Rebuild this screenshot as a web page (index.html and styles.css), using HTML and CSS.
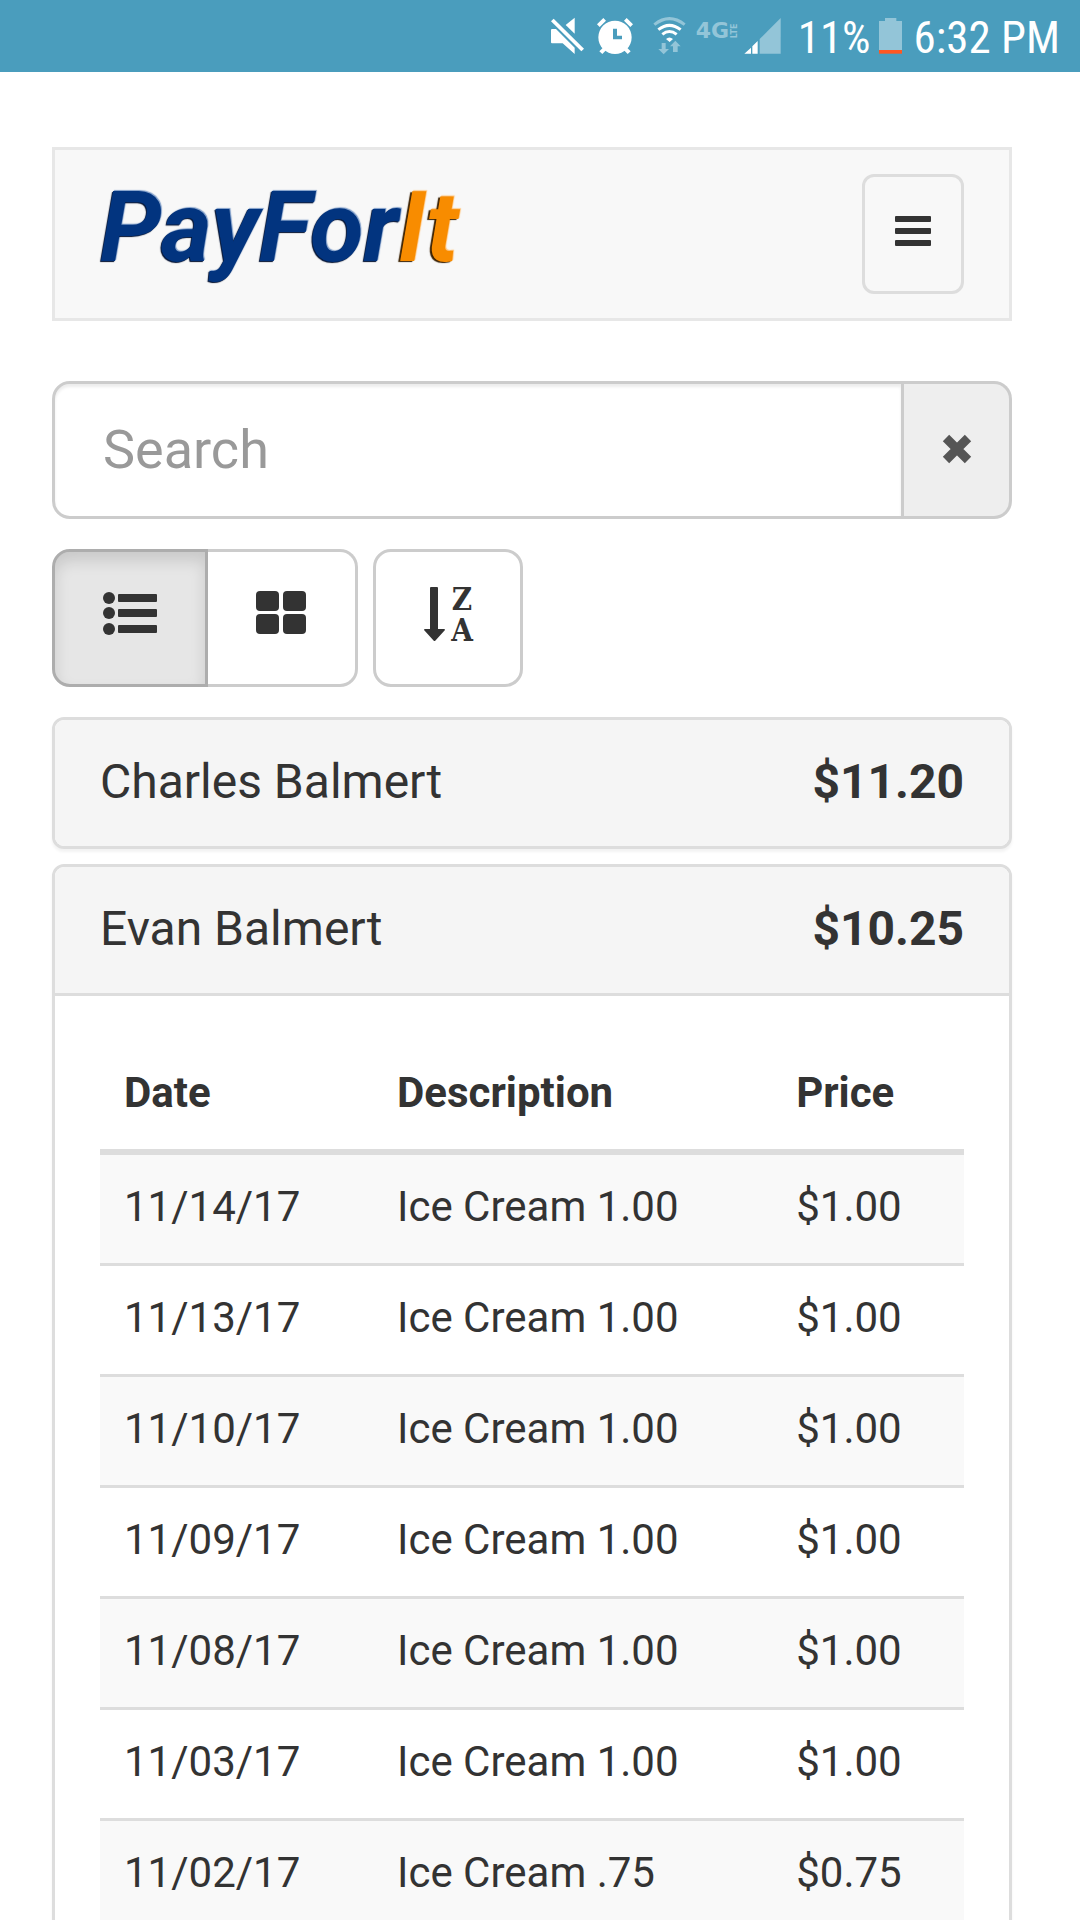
FILE: index.html
```html
<!DOCTYPE html>
<html lang="en">
<head>
    <meta charset="UTF-8">
    <meta name="viewport" content="width=device-width, initial-scale=1.0">
    <title>PayForIt</title>
    <link rel="stylesheet" href="styles.css">
</head>
<body>
    <div class="status-bar">
        <svg width="41" height="72" viewBox="57 0 123 216" fill="#fff">
            <path d="M63 90q0-3 3-3h12l56 56v19l-36-32H66q-3 0-3-3z"/>
            <path d="M134 53v48l-27-26z"/>
            <path d="M71 56l91 90-8 8-91-90z"/>
        </svg>
        <svg width="40" height="72" viewBox="198 0 120 216" fill="#fff">
            <path fill-rule="evenodd" d="M255 62a50 50 0 1 0 0 100 50 50 0 0 0 0-100zM249 86h12v21h15v11h-27z"/>
            <path d="M201 73l19-19 8 8-19 19zM309 73l-19-19-8 8 19 19zM208 154l14-14 9 8-14 14zM302 154l-14-14-9 8 14 14z"/>
        </svg>
        <svg width="48" height="72" viewBox="336 0 144 216" fill="none">
            <path d="M373 74q45-36 91 0" stroke="#93c5d8" stroke-width="9"/>
            <path d="M385 89q33-26 67 0M397 103q21-17 43 0" stroke="#fff" stroke-width="9"/>
            <path d="M408 117q10-9 21 0l-10 9z" fill="#fff"/>
            <path d="M395 129h12v18h10l-16 16-16-16h10zM429 156v-17h-9l16-17 16 17h-9v17z" fill="#93c5d8"/>
        </svg>
        <svg class="network" width="42" height="72" viewBox="498 0 126 216" fill="#93c5d8">
            <text x="497" y="114" font-size="66">4G</text>
            <text font-size="24" transform="translate(620 115) rotate(-90)">LTE</text>
        </svg>
        <svg width="48" height="72" viewBox="642 0 144 216">
            <path d="M752 54v107h-63v-44z" fill="#93c5d8"/>
            <path d="M643 161l20-18v18zM667 161v-22l16-16v38z" fill="#fff"/>
        </svg>
        <span class="status-text">11%</span>
        <svg width="31" height="72" viewBox="285 0 93 216">
            <path d="M309 54h34v9h17v87h-69V63h18z" fill="#93c5d8"/>
            <path d="M291 150h69v11h-69z" fill="#ff5722"/>
        </svg>
        <span class="status-text">6:32 PM</span>
    </div>

    <main class="container">
        <nav class="navbar">
            <a href="#" class="navbar-brand">PayFor<span class="brand-it">It</span></a>
            <button type="button" class="navbar-toggle" aria-label="Toggle navigation">
                <span class="icon-bar"></span>
                <span class="icon-bar"></span>
                <span class="icon-bar"></span>
            </button>
        </nav>

        <div class="input-group">
            <input type="text" class="form-control" placeholder="Search" aria-label="Search">
            <button type="button" class="input-group-btn" aria-label="Clear search">
                <svg width="30" height="30" viewBox="0 0 30 30" stroke="#555" stroke-width="9">
                    <path d="M4 4l22 22M26 4L4 26"/>
                </svg>
            </button>
        </div>

        <div class="toolbar">
            <div class="btn-group">
                <button type="button" class="btn active" aria-label="List view">
                    <svg width="54" height="54" viewBox="0 0 54 54" fill="#333">
                        <circle cx="6" cy="12" r="6"/>
                        <circle cx="6" cy="27" r="6"/>
                        <circle cx="6" cy="43" r="6"/>
                        <rect x="15" y="8" width="39" height="8" rx="1"/>
                        <rect x="15" y="23" width="39" height="8" rx="1"/>
                        <rect x="15" y="39" width="39" height="8" rx="1"/>
                    </svg>
                </button>
                <button type="button" class="btn" aria-label="Grid view">
                    <svg width="51" height="54" viewBox="0 0 51 54" fill="#333">
                        <rect x="0" y="5" width="23" height="20" rx="4"/>
                        <rect x="27" y="5" width="23" height="20" rx="4"/>
                        <rect x="0" y="28" width="23" height="20" rx="4"/>
                        <rect x="27" y="28" width="23" height="20" rx="4"/>
                    </svg>
                </button>
            </div>
            <button type="button" class="btn" aria-label="Sort descending">
                <svg class="sort-icon" width="48" height="54" viewBox="0 0 48 54" fill="#333">
                    <path d="M7 1h6q1 0 1 1v41h6q1 0 1 1L11 55h-1L0 44q0-1 1-1h5V2q0-1 1-1z"/>
                    <text x="38" y="24" text-anchor="middle">Z</text>
                    <text x="38" y="55" text-anchor="middle">A</text>
                </svg>
            </button>
        </div>

        <section class="panel">
            <div class="panel-heading">
                <span>Charles Balmert</span>
                <strong>$11.20</strong>
            </div>
        </section>

        <section class="panel">
            <div class="panel-heading">
                <span>Evan Balmert</span>
                <strong>$10.25</strong>
            </div>
            <div class="panel-body">
                <table class="table">
                    <thead>
                        <tr>
                            <th class="col-date">Date</th>
                            <th class="col-desc">Description</th>
                            <th>Price</th>
                        </tr>
                    </thead>
                    <tbody>
                        <tr>
                            <td>11/14/17</td>
                            <td>Ice Cream 1.00</td>
                            <td>$1.00</td>
                        </tr>
                        <tr>
                            <td>11/13/17</td>
                            <td>Ice Cream 1.00</td>
                            <td>$1.00</td>
                        </tr>
                        <tr>
                            <td>11/10/17</td>
                            <td>Ice Cream 1.00</td>
                            <td>$1.00</td>
                        </tr>
                        <tr>
                            <td>11/09/17</td>
                            <td>Ice Cream 1.00</td>
                            <td>$1.00</td>
                        </tr>
                        <tr>
                            <td>11/08/17</td>
                            <td>Ice Cream 1.00</td>
                            <td>$1.00</td>
                        </tr>
                        <tr>
                            <td>11/03/17</td>
                            <td>Ice Cream 1.00</td>
                            <td>$1.00</td>
                        </tr>
                        <tr>
                            <td>11/02/17</td>
                            <td>Ice Cream .75</td>
                            <td>$0.75</td>
                        </tr>
                    </tbody>
                </table>
            </div>
        </section>
    </main>
</body>
</html>
```
FILE: styles.css
```css
* { margin: 0; padding: 0; box-sizing: border-box; }
body {
    background: #fff;
    color: #333;
    font-family: Roboto, "Liberation Sans", sans-serif;
    font-size: 42px;
    line-height: 60px;
    height: 100vh;
    display: flex;
    flex-direction: column;
    overflow: hidden;
}
svg {
    display: block;
    flex-shrink: 0;
}
button {
    font: inherit;
    cursor: pointer;
}

/* phone status bar */
.status-bar {
    display: flex;
    justify-content: flex-end;
    align-items: center;
    gap: 6px;
    flex-shrink: 0;
    padding-right: 20px;
    background: #4a9dbd;
    color: #fff;
}
.status-text {
    padding-top: 4px;
    font-family: "Roboto Condensed", Roboto, sans-serif;
    font-size: 45px;
    white-space: nowrap;
}
.network {
    overflow: visible;
    font-family: "DejaVu Sans", sans-serif;
    font-weight: bold;
}

.container {
    flex: 1;
    min-height: 0;
    padding: 75px 68px 0 52px;
    overflow-y: auto;
    scrollbar-width: none;
}

/* navbar */
.navbar {
    display: flex;
    justify-content: space-between;
    align-items: center;
    margin-bottom: 60px;
    padding: 24px 45px;
    background: #f8f8f8;
    border: 3px solid #e7e7e7;
}
.navbar-brand {
    padding-bottom: 12px;
    color: #02347f;
    font-size: 98px;
    font-style: italic;
    font-weight: 700;
    line-height: 96px;
    text-decoration: none;
    text-shadow: -1px 1px 1px #001030, 1px -1px 1px #7d9cc8;
}
.brand-it {
    color: #f88c00;
    text-shadow: -2px 1px 1px #3a2000, 1px -1px 1px #ffc37a;
}
.navbar-toggle {
    display: flex;
    flex-direction: column;
    gap: 6px;
    padding: 39px 30px 45px;
    background: transparent;
    border: 3px solid #ddd;
    border-radius: 12px;
}
.icon-bar {
    width: 36px;
    height: 6px;
    background: #333;
    border-radius: 1px;
}

/* search */
.input-group {
    display: flex;
    margin-bottom: 30px;
}
.form-control {
    flex: 1;
    min-width: 0;
    height: 138px;
    padding: 29px 48px 31px;
    background: #fff;
    border: 3px solid #ccc;
    border-radius: 18px 0 0 18px;
    box-shadow: inset 0 3px 3px rgba(0, 0, 0, 0.075);
    color: #555;
    font: inherit;
    font-size: 54px;
}
.form-control::placeholder {
    color: #999;
    opacity: 1;
}
.input-group-btn {
    display: flex;
    align-items: center;
    padding: 0 37px 3px 38px;
    background: #eee;
    border: 3px solid #ccc;
    border-left: 0;
    border-radius: 0 18px 18px 0;
}

/* view buttons */
.toolbar {
    display: flex;
    gap: 15px;
    margin-bottom: 30px;
}
.btn-group {
    display: flex;
}
.btn {
    padding: 34px 48px 44px;
    background: #fff;
    border: 3px solid #ccc;
    border-radius: 18px;
}
.btn-group .btn:first-child {
    border-radius: 18px 0 0 18px;
}
.btn-group .btn:last-child {
    border-left: 0;
    border-radius: 0 18px 18px 0;
}
.btn.active {
    background: #e6e6e6;
    border-color: #adadad;
    box-shadow: inset 0 9px 15px rgba(0, 0, 0, 0.125);
}
.sort-icon {
    overflow: visible;
    font-family: "DejaVu Serif Condensed", "DejaVu Serif", serif;
    font-size: 31px;
    font-weight: bold;
}

/* people */
.panel {
    margin-bottom: 15px;
    background: #fff;
    border: 3px solid #ddd;
    border-radius: 12px;
    box-shadow: 0 3px 3px rgba(0, 0, 0, 0.05);
}
.panel-heading {
    display: flex;
    justify-content: space-between;
    padding: 30px 45px 32px;
    background: #f5f5f5;
    border-radius: 9px;
    font-size: 48px;
    line-height: 64px;
}
.panel-heading:not(:last-child) {
    border-bottom: 3px solid #ddd;
    border-radius: 9px 9px 0 0;
}
.panel-body {
    padding: 45px;
}

.table {
    width: 100%;
    table-layout: fixed;
    border-collapse: collapse;
}
.table th,
.table td {
    padding: 22px 24px 26px;
    text-align: left;
}
.table th {
    border-bottom: 6px solid #ddd;
}
.table td {
    border-top: 3px solid #ddd;
}
.table tbody tr:first-child td {
    border-top: 0;
}
.table tbody tr:nth-child(odd) {
    background: #f9f9f9;
}
.table .col-date {
    width: 31.6%;
}
.table .col-desc {
    width: 46.2%;
}
```
